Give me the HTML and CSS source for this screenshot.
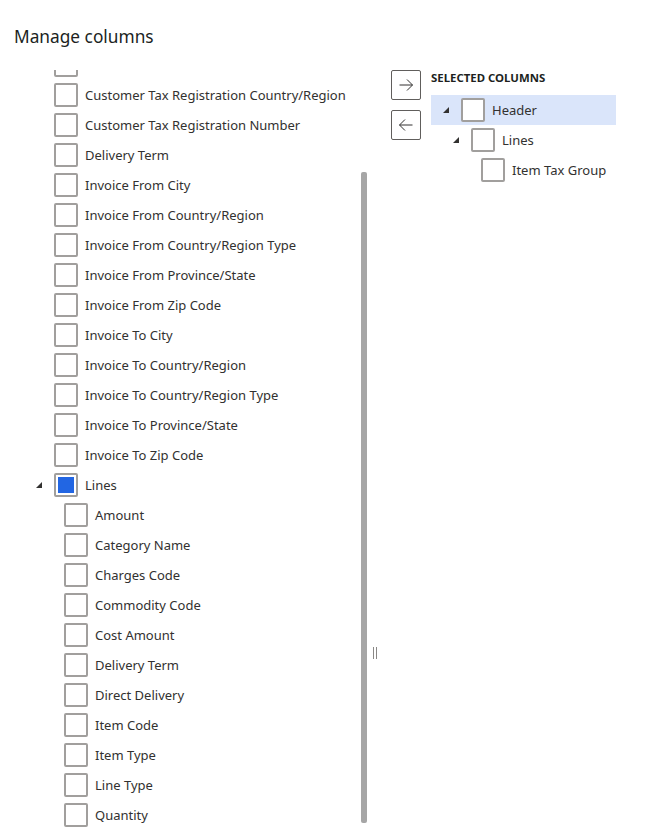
FILE: index.html
```html
<!DOCTYPE html>
<html lang="en">
<head>
<meta charset="utf-8">
<title>Manage columns</title>
<link rel="stylesheet" href="styles.css">
</head>
<body>
<div class="dialog">
  <h1 class="title">Manage columns</h1>
  <div class="panes">
    <div class="available">
      <div class="viewport">
        <ul class="tree scrolled">
          <li class="row lvl1"><span class="exp"></span><span class="cb"></span><span class="label"></span></li>
          <li class="row lvl1"><span class="exp"></span><span class="cb"></span><span class="label">Customer Tax Registration Country/Region</span></li>
          <li class="row lvl1"><span class="exp"></span><span class="cb"></span><span class="label">Customer Tax Registration Number</span></li>
          <li class="row lvl1"><span class="exp"></span><span class="cb"></span><span class="label">Delivery Term</span></li>
          <li class="row lvl1"><span class="exp"></span><span class="cb"></span><span class="label">Invoice From City</span></li>
          <li class="row lvl1"><span class="exp"></span><span class="cb"></span><span class="label">Invoice From Country/Region</span></li>
          <li class="row lvl1"><span class="exp"></span><span class="cb"></span><span class="label">Invoice From Country/Region Type</span></li>
          <li class="row lvl1"><span class="exp"></span><span class="cb"></span><span class="label">Invoice From Province/State</span></li>
          <li class="row lvl1"><span class="exp"></span><span class="cb"></span><span class="label">Invoice From Zip Code</span></li>
          <li class="row lvl1"><span class="exp"></span><span class="cb"></span><span class="label">Invoice To City</span></li>
          <li class="row lvl1"><span class="exp"></span><span class="cb"></span><span class="label">Invoice To Country/Region</span></li>
          <li class="row lvl1"><span class="exp"></span><span class="cb"></span><span class="label">Invoice To Country/Region Type</span></li>
          <li class="row lvl1"><span class="exp"></span><span class="cb"></span><span class="label">Invoice To Province/State</span></li>
          <li class="row lvl1"><span class="exp"></span><span class="cb"></span><span class="label">Invoice To Zip Code</span></li>
          <li class="row lvl1"><span class="exp open"></span><span class="cb checked"></span><span class="label">Lines</span></li>
          <li class="row lvl2"><span class="exp"></span><span class="cb"></span><span class="label">Amount</span></li>
          <li class="row lvl2"><span class="exp"></span><span class="cb"></span><span class="label">Category Name</span></li>
          <li class="row lvl2"><span class="exp"></span><span class="cb"></span><span class="label">Charges Code</span></li>
          <li class="row lvl2"><span class="exp"></span><span class="cb"></span><span class="label">Commodity Code</span></li>
          <li class="row lvl2"><span class="exp"></span><span class="cb"></span><span class="label">Cost Amount</span></li>
          <li class="row lvl2"><span class="exp"></span><span class="cb"></span><span class="label">Delivery Term</span></li>
          <li class="row lvl2"><span class="exp"></span><span class="cb"></span><span class="label">Direct Delivery</span></li>
          <li class="row lvl2"><span class="exp"></span><span class="cb"></span><span class="label">Item Code</span></li>
          <li class="row lvl2"><span class="exp"></span><span class="cb"></span><span class="label">Item Type</span></li>
          <li class="row lvl2"><span class="exp"></span><span class="cb"></span><span class="label">Line Type</span></li>
          <li class="row lvl2"><span class="exp"></span><span class="cb"></span><span class="label">Quantity</span></li>
        </ul>
      </div>
      <div class="thumb"></div>
    </div>
    <div class="splitter"><span class="grip"></span></div>
    <div class="transfer">
      <button class="move" aria-label="Add">
        <svg width="16" height="16" viewBox="0 0 16 16"><path d="M1.5 8h13M9 2.5 14.5 8 9 13.5" fill="none" stroke="#323130" stroke-width="1"/></svg>
      </button>
      <button class="move" aria-label="Remove">
        <svg width="16" height="16" viewBox="0 0 16 16"><path d="M14.5 8h-13M7 2.5 1.5 8 7 13.5" fill="none" stroke="#323130" stroke-width="1"/></svg>
      </button>
    </div>
    <div class="selected">
      <div class="heading">SELECTED COLUMNS</div>
      <ul class="tree">
        <li class="row lvl0 active"><span class="exp open"></span><span class="cb"></span><span class="label">Header</span></li>
        <li class="row lvl1"><span class="exp open"></span><span class="cb"></span><span class="label">Lines</span></li>
        <li class="row lvl2"><span class="exp"></span><span class="cb"></span><span class="label">Item Tax Group</span></li>
      </ul>
    </div>
  </div>
</div>
</body>
</html>
```
FILE: styles.css
```css
* { box-sizing: border-box; }
html, body { margin: 0; padding: 0; background: #fff; }
body {
  font-family: "Noto Sans", "Open Sans", sans-serif;
  color: #323130;
  overflow: hidden;
}
.dialog { width: 671px; height: 831px; }
.title {
  margin: 0;
  padding: 25px 0 0 14px;
  height: 70px;
  font-size: 17.3px;
  font-weight: 400;
  line-height: 24px;
  color: #201f1e;
}
.panes { display: flex; height: 761px; }
.available {
  position: relative;
  width: 369px;
  padding-left: 14px;
}
.viewport { height: 761px; overflow: hidden; width: 344px; }
.tree { list-style: none; margin: 0; padding: 0; }
.tree.scrolled { margin-top: -20px; }
.row {
  display: flex;
  align-items: center;
  height: 30px;
  font-size: 13px;
  white-space: nowrap;
}
.lvl0 { padding-left: 8px; }
.lvl1 { padding-left: 18px; }
.lvl2 { padding-left: 28px; }
.exp { width: 22px; height: 30px; flex: none; position: relative; }
.exp.open::before {
  content: "";
  position: absolute;
  left: 4px;
  top: 12px;
  width: 0; height: 0;
  border-left: 6px solid transparent;
  border-bottom: 6px solid #323130;
}
.cb {
  width: 24px; height: 24px; flex: none;
  border: 2px solid #a19f9d;
  border-radius: 2px;
  background: #fff;
  padding: 2px;
}
.cb.checked::after {
  content: "";
  display: block;
  width: 16px; height: 16px;
  background: #2266e3;
}
.label { margin-left: 7px; }
.thumb {
  position: absolute;
  left: 361px;
  top: 102px;
  width: 6px;
  height: 651px;
  background: #a6a6a6;
  border-radius: 2px;
}
.splitter {
  width: 11px;
  display: flex;
  justify-content: center;
  padding-top: 577px;
}
.grip {
  width: 4px; height: 12px;
  border-left: 1px solid #8a8886;
  border-right: 1px solid #8a8886;
}
.transfer {
  margin-left: 11px;
  width: 30px;
  display: flex;
  flex-direction: column;
  gap: 10px;
}
.move {
  width: 30px; height: 30px;
  padding: 0;
  border: 1px solid #605e5c;
  border-radius: 2px;
  background: #fff;
  display: flex;
  align-items: center;
  justify-content: center;
}
.selected { margin-left: 10px; width: 185px; }
.heading {
  height: 25px;
  font-size: 11.4px;
  font-weight: 700;
  line-height: 16px;
  color: #201f1e;
}
.active { background: #dae5fa; }
```
